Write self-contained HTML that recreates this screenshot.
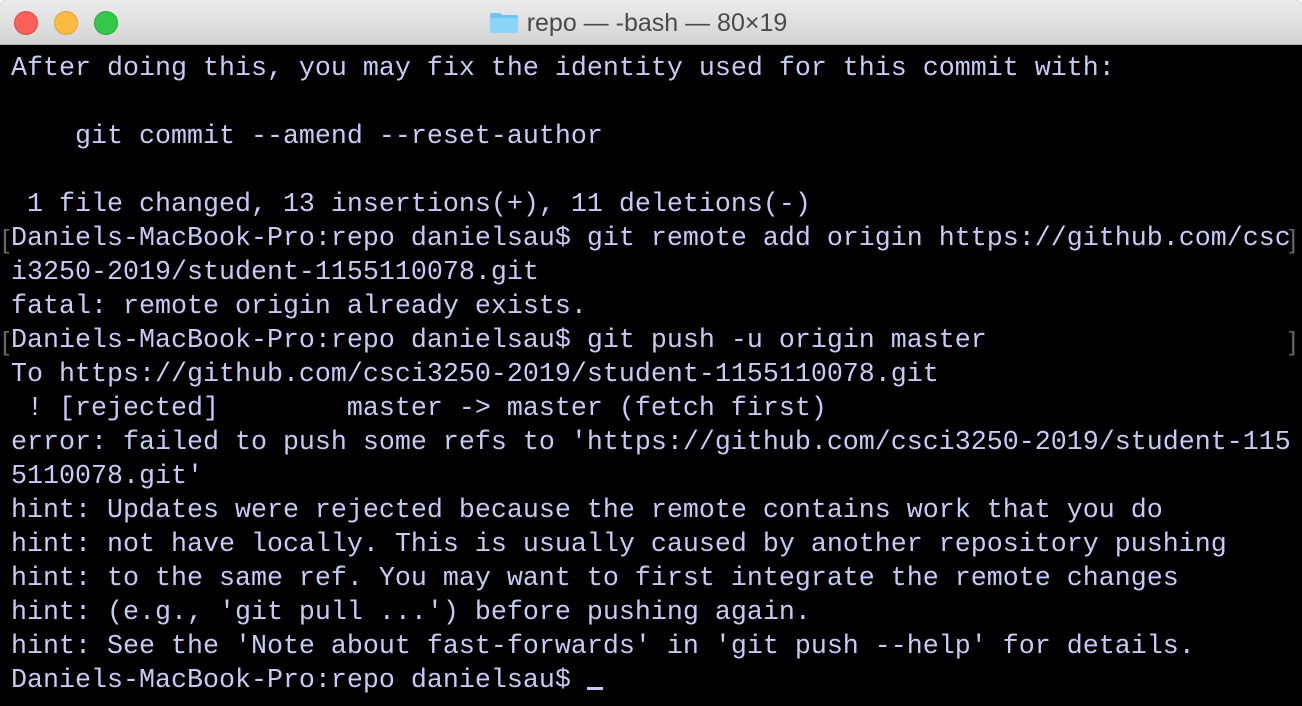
<!DOCTYPE html>
<html><head><meta charset="utf-8"><style>
html,body{margin:0;padding:0;background:#fff;}
body{width:1302px;height:706px;overflow:hidden;position:relative;}
.win{position:absolute;left:0;top:0;width:1302px;height:706px;background:#000;border-radius:6px 6px 0 0;overflow:hidden;}
.tb{position:absolute;left:0;top:0;width:1302px;height:44px;background:linear-gradient(#ececec,#d4d4d4);border-bottom:1px solid #b0b0b0;}
.dot{position:absolute;top:11px;width:22px;height:22px;border-radius:50%;}
.title{position:absolute;left:-13px;right:13px;top:9px;text-align:center;font:25px "Liberation Sans",sans-serif;color:#4a4a4a;}
.folder{display:inline-block;width:30px;height:22px;vertical-align:-3px;margin-right:8px;position:relative;}
.term{position:absolute;left:11px;top:52px;font-family:"Liberation Mono",monospace;font-size:26.67px;line-height:34px;color:#c6cbf5;white-space:pre;}
.br{position:absolute;color:#666;font-family:"Liberation Sans",sans-serif;font-size:26px;line-height:34px;}
.cur{display:inline-block;width:16px;height:3px;background:#c6cbf5;vertical-align:-3px;}
</style></head><body>
<div class="win">
<div class="tb">
<div class="dot" style="left:14px;background:#fc605b;border:1px solid #de4a44;"></div>
<div class="dot" style="left:54px;background:#fdbc40;border:1px solid #dea236;"></div>
<div class="dot" style="left:94px;background:#34c84a;border:1px solid #27aa35;"></div>
<div class="title"><span class="folder"><svg width="30" height="22" viewBox="0 0 30 22"><path d="M1 3 Q1 1 3 1 H11 L13 3 H27 Q29 3 29 5 V20 Q29 21 27 21 H3 Q1 21 1 20 Z" fill="#6cc6f5"/><rect x="1" y="6" width="28" height="15" rx="1" fill="#8ad4fa"/></svg></span>repo — -bash — 80×19</div>
</div>
<div class="br" style="left:2px;top:222px;">[</div>
<div class="br" style="left:1289px;top:222px;">]</div>
<div class="br" style="left:2px;top:324px;">[</div>
<div class="br" style="left:1289px;top:324px;">]</div>
<div class="term">After doing this, you may fix the identity used for this commit with:

    git commit --amend --reset-author

 1 file changed, 13 insertions(+), 11 deletions(-)
Daniels-MacBook-Pro:repo danielsau$ git remote add origin https://github.com/csc
i3250-2019/student-1155110078.git
fatal: remote origin already exists.
Daniels-MacBook-Pro:repo danielsau$ git push -u origin master
To https://github.com/csci3250-2019/student-1155110078.git
 ! [rejected]        master -&gt; master (fetch first)
error: failed to push some refs to 'https://github.com/csci3250-2019/student-115
5110078.git'
hint: Updates were rejected because the remote contains work that you do
hint: not have locally. This is usually caused by another repository pushing
hint: to the same ref. You may want to first integrate the remote changes
hint: (e.g., 'git pull ...') before pushing again.
hint: See the 'Note about fast-forwards' in 'git push --help' for details.
Daniels-MacBook-Pro:repo danielsau$ <span class="cur"></span></div>
</div>
</body></html>
